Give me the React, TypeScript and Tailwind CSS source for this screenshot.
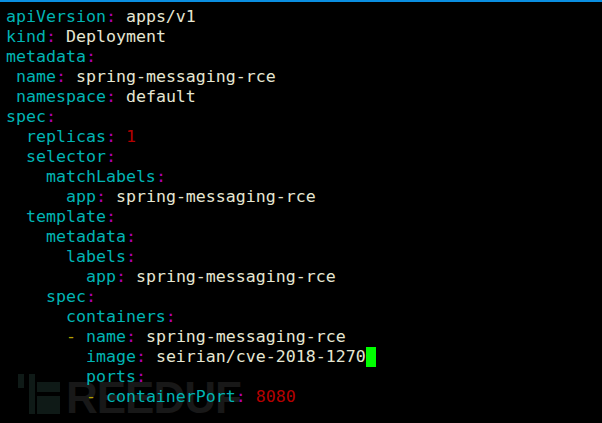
const KEY = "text-[#00b4b4]";
const COLON = "text-[#b400b4]";
const VALUE = "text-[#e6e6d2]";
const NUM = "text-[#b40000]";

type Line = { indent: number; dash?: boolean; k: string; v?: string; num?: boolean; cursor?: boolean };

const lines: Line[] = [
  { indent: 0, k: "apiVersion", v: "apps/v1" },
  { indent: 0, k: "kind", v: "Deployment" },
  { indent: 0, k: "metadata" },
  { indent: 1, k: "name", v: "spring-messaging-rce" },
  { indent: 1, k: "namespace", v: "default" },
  { indent: 0, k: "spec" },
  { indent: 2, k: "replicas", v: "1", num: true },
  { indent: 2, k: "selector" },
  { indent: 4, k: "matchLabels" },
  { indent: 6, k: "app", v: "spring-messaging-rce" },
  { indent: 2, k: "template" },
  { indent: 4, k: "metadata" },
  { indent: 6, k: "labels" },
  { indent: 8, k: "app", v: "spring-messaging-rce" },
  { indent: 4, k: "spec" },
  { indent: 6, k: "containers" },
  { indent: 6, dash: true, k: "name", v: "spring-messaging-rce" },
  { indent: 8, k: "image", v: "seirian/cve-2018-1270", cursor: true },
  { indent: 8, k: "ports" },
  { indent: 8, dash: true, k: "containerPort", v: "8080", num: true },
];

function YamlLine({ line }: { line: Line }) {
  return (
    <div className="h-5 whitespace-pre leading-5">
      {" ".repeat(line.indent)}
      {line.dash ? <span className="text-[#b4a000]">- </span> : null}
      <span className={KEY}>{line.k}</span>
      <span className={COLON}>:</span>
      {line.v ? <span className={line.num ? NUM : VALUE}> {line.v}</span> : null}
      {line.cursor ? <span className="inline-block h-5 w-2.5 bg-[#00ff00] align-top" /> : null}
    </div>
  );
}

export default function App() {
  return (
    <div className="relative h-[423px] w-[602px] overflow-hidden bg-black">
      <div className="h-0.5 bg-[#0a8ee0]" />
      {/* watermark */}
      <div className="absolute left-[18px] top-[374px] flex items-end gap-[5px]">
        <div className="flex h-[40px] flex-col gap-[4px]">
          <div className="flex gap-[5px]">
            <div className="h-[14px] w-[6px] bg-[#0f1a17]" />
          </div>
        </div>
        <div className="h-[40px] w-[6px] bg-[#0f1a17]" />
      </div>
      <div className="absolute left-[37px] top-[382px] flex flex-col gap-[4px]">
        <div className="h-[10px] w-[23px] bg-[#0f1a17]" />
        <div className="h-[18px] w-[23px] bg-[#0f1a17]" />
      </div>
      <div className="absolute left-[66px] top-[372px] font-['Liberation_Sans',sans-serif] text-[44px] leading-[52px] font-bold tracking-[-1px] text-[#181818]">
        REEDUF
      </div>
      <div className="relative pt-[5px] pl-1.5 font-['DejaVu_Sans_Mono',monospace] text-[16.6px]">
        {lines.map((line, i) => (
          <YamlLine key={i} line={line} />
        ))}
      </div>
    </div>
  );
}
